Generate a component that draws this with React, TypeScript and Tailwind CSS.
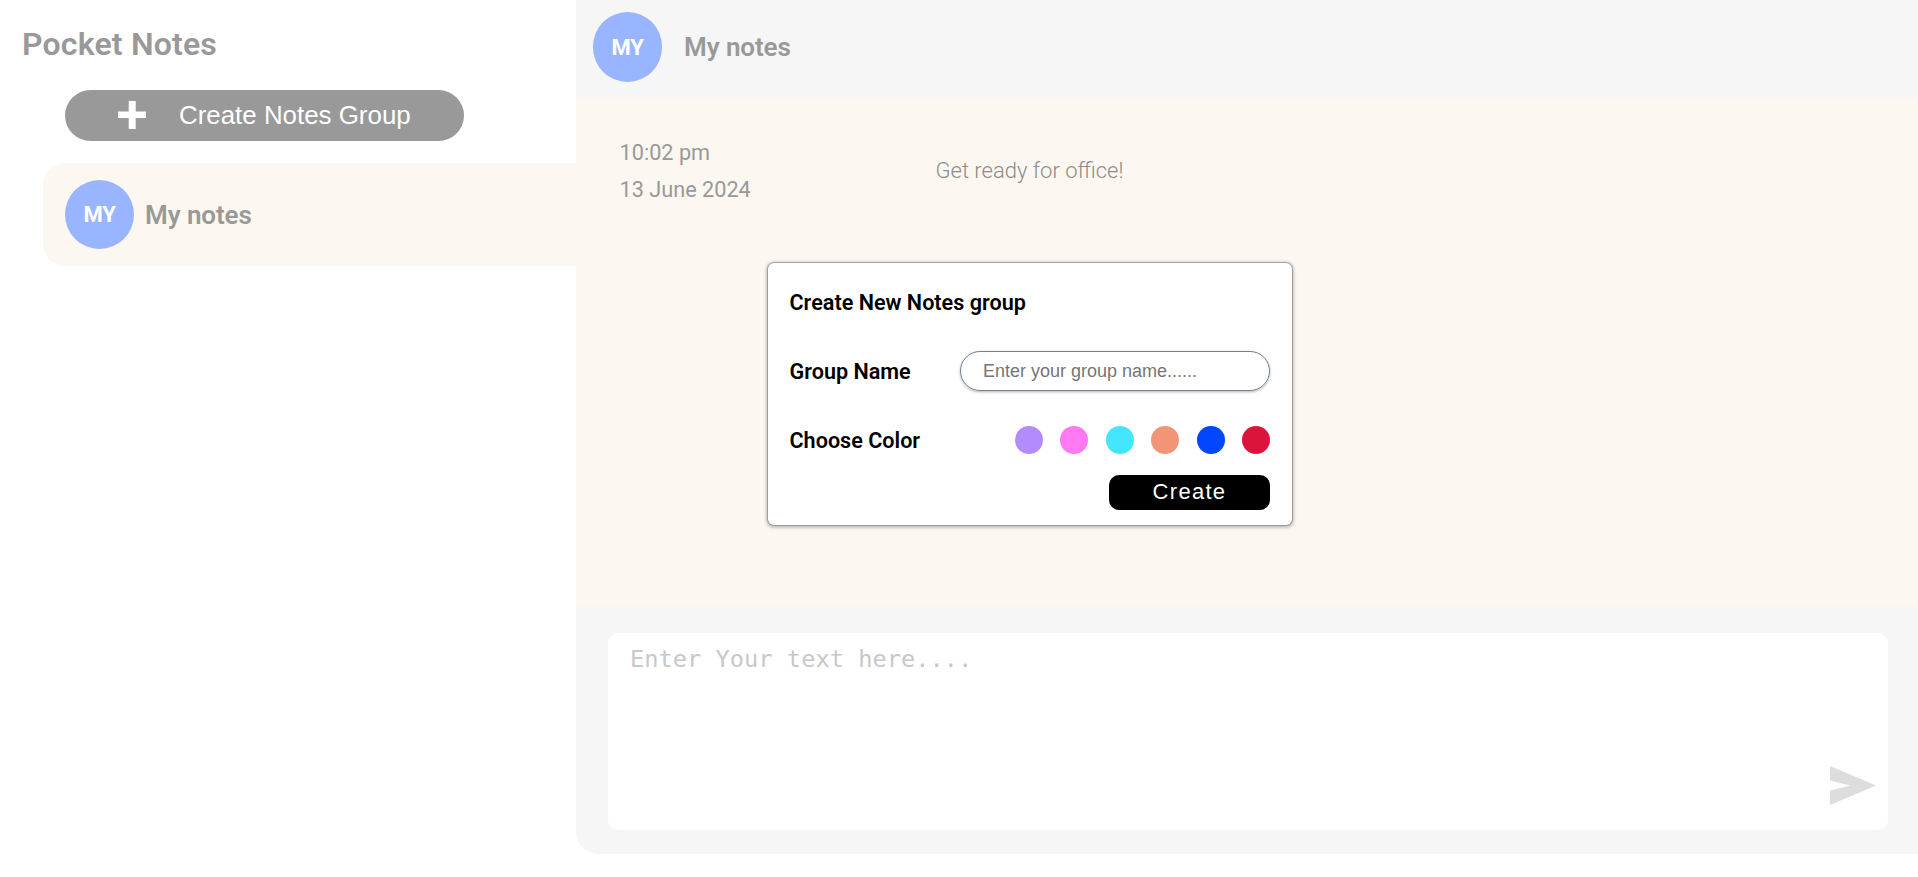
import React from "react";

const colors = [
  "bg-[#b38bfa]",
  "bg-[#ff79f2]",
  "bg-[#43e6fc]",
  "bg-[#f19576]",
  "bg-[#0047ff]",
  "bg-[#dc143c]",
];

function Avatar() {
  return (
    <div className="flex h-full max-h-[70px] w-[69px] shrink-0 items-center justify-center rounded-full bg-[#99b5ff] text-[22px] font-bold tracking-[-0.3px] text-white">
      MY
    </div>
  );
}

function Sidebar() {
  return (
    <aside className="flex w-[576px] shrink-0 flex-col">
      <h1 className="mt-6 ml-[22px] text-[32px] leading-10 font-semibold tracking-[0.18px] text-[#999]">
        Pocket Notes
      </h1>
      <button className="mt-[26px] ml-[65px] flex h-[51px] w-[399px] items-center rounded-full bg-[#999] pl-[53px] font-['Liberation_Sans',sans-serif] text-[25.9px] text-white">
        <svg width="28" height="28" viewBox="0 0 28 28" fill="currentColor" className="mb-[2px] shrink-0">
          <path d="M10.7 0h7v10.5H28v6.5H17.7V28h-7V17H0v-6.5h10.7z" />
        </svg>
        <span className="ml-[33px]">Create Notes Group</span>
      </button>
      <div className="mt-[22px] ml-[43px] flex h-[103px] items-center gap-[11px] rounded-l-[22px] bg-[#fdf7f1] py-[17px] pl-[22px]">
        <Avatar />
        <span className="pt-0.5 text-[26px] font-semibold tracking-[-0.08px] text-[#999]">My notes</span>
      </div>
    </aside>
  );
}

function Modal() {
  return (
    <div className="absolute top-[263px] left-[768px] h-[262px] w-[523.5px] rounded-md bg-white pt-[25px] pr-[21.5px] pl-[21.5px] text-[21.6px] font-semibold text-black shadow-[0_0_0_1px_rgba(0,0,0,0.22),0_1px_3px_2px_rgba(0,0,0,0.22)]">
      <h2 className="h-[30px] leading-[30px]">Create New Notes group</h2>
      <div className="mt-[33px] flex h-10 items-center justify-between">
        <label htmlFor="group" className="pt-[2px]">
          Group Name
        </label>
        <input
          id="group"
          placeholder="Enter your group name......"
          className="h-10 w-[310px] rounded-full border border-[#708090] px-[22px] font-['Liberation_Sans',sans-serif] text-[18px] font-normal shadow-[0_1px_3px_rgba(0,0,0,0.3)] outline-none placeholder:text-[#757575]"
        />
      </div>
      <div className="mt-[34px] flex h-[30px] items-center justify-between">
        <span className="pt-[2px]">Choose Color</span>
        <div className="flex gap-[17.4px]">
          {colors.map((c) => (
            <span key={c} className={`size-7 rounded-full ${c}`} />
          ))}
        </div>
      </div>
      <button className="mt-5 ml-auto flex h-[35px] w-[161px] items-center justify-center rounded-[10px] bg-black pb-[2px] font-['Liberation_Sans',sans-serif] text-[22px] font-normal tracking-[1.3px] text-white">
        Create
      </button>
    </div>
  );
}

export default function App() {
  return (
    <div className="relative flex h-[877px] w-[1918px] overflow-hidden bg-white font-[Roboto,sans-serif]">
      <Sidebar />
      <main className="flex h-[854px] flex-1 flex-col overflow-hidden rounded-bl-[22px] bg-[#f6f6f6]">
        <header className="flex h-[97px] pt-3 pb-[15px] pl-[17px]">
          <Avatar />
          <span className="ml-[22px] text-[26px] leading-[70px] font-semibold tracking-[-0.08px] text-[#999]">
            My notes
          </span>
        </header>
        <section className="flex h-[510px] bg-[#fdf7f1] pl-[43.5px] text-[22px] text-[#999]">
          <div className="w-[316px] pt-[37px] text-[21.7px] leading-[37px]">
            <p>10:02 pm</p>
            <p>13 June 2024</p>
          </div>
          <p className="pt-[55px] leading-[37px] font-light text-[#8c8c8c]">Get ready for office!</p>
        </section>
        <footer className="pt-[26px] pr-[30px] pl-8">
          <div className="flex h-[197px] items-end rounded-[10px] bg-white">
            <textarea
              placeholder="Enter Your text here...."
              className="h-[197px] flex-1 resize-none pt-[10px] pl-[22px] font-['DejaVu_Sans_Mono',monospace] text-[23.7px] leading-[32px] outline-none placeholder:text-[#c8c8c8]"
            />
            <svg width="46" height="39" viewBox="0 0 46 39" fill="#ddd" className="mr-3 mb-[25px] shrink-0">
              <path d="M0 0L46 19.5L0 39V24.5L20 19.5L0 14.5Z" />
            </svg>
          </div>
        </footer>
      </main>
      <Modal />
    </div>
  );
}
